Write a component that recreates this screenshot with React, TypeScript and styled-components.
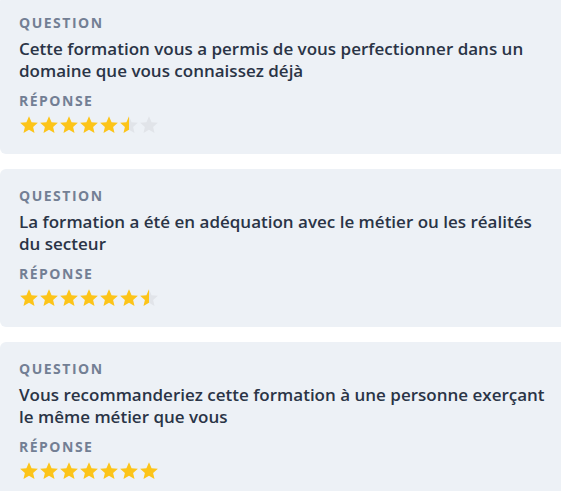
import React from "react";
import styled, { createGlobalStyle } from "styled-components";

const Global = createGlobalStyle`
  html, body { margin: 0; padding: 0; background: #ffffff; }
  body { font-family: "Open Sans", "Noto Sans", sans-serif; overflow: hidden; }
`;

const List = styled.div`
  display: flex;
  flex-direction: column;
  gap: 15px;
  margin-top: -4px;
  margin-right: -10px;
`;

const Card = styled.section`
  background: #edf1f6;
  border-radius: 6px;
  padding: 18px 19px 19px;
  display: flex;
  flex-direction: column;
`;

const Label = styled.div<{ $gap?: number }>`
  font-size: 14px;
  line-height: 18px;
  font-weight: 700;
  letter-spacing: 1.5px;
  text-transform: uppercase;
  color: #737f94;
  margin-bottom: ${(p) => p.$gap ?? 6}px;
`;

const Title = styled.div`
  font-size: 17px;
  line-height: 22px;
  font-weight: 600;
  color: #2a3446;
  margin-bottom: 10px;
  max-width: 527px;
`;

const Stars = styled.div`
  display: flex;
  height: 20px;
`;

const STAR =
  "M12 1.6l3.1 6.95 7.55.72-5.72 5 1.7 7.42L12 17.8l-6.63 3.89 1.7-7.420-5.72-5 7.55-.72z";

const Star: React.FC<{ fill: number; id: string }> = ({ fill, id }) => (
  <svg width="20" height="20" viewBox="0 0 24 24">
    <defs>
      <linearGradient id={id} x1="0" x2="1" y1="0" y2="0">
        <stop offset={`${fill * 100}%`} stopColor="#fcc419" />
        <stop offset={`${fill * 100}%`} stopColor="#e1e4e9" />
      </linearGradient>
    </defs>
    <path d={STAR} fill={`url(#${id})`} />
  </svg>
);

const Rating: React.FC<{ value: number; max?: number; uid: string }> = ({
  value,
  max = 7,
  uid,
}) => (
  <Stars>
    {Array.from({ length: max }, (_, i) => {
      const f = Math.max(0, Math.min(1, value - i));
      return <Star key={i} fill={f} id={`${uid}-${i}`} />;
    })}
  </Stars>
);

const items = [
  {
    q: "Cette formation vous a permis de vous perfectionner dans un domaine que vous connaissez déjà",
    r: 5.5,
  },
  {
    q: "La formation a été en adéquation avec le métier ou les réalités du secteur",
    r: 6.5,
  },
  {
    q: "Vous recommanderiez cette formation à une personne exerçant le même métier que vous",
    r: 7,
  },
];

export default function App() {
  return (
    <>
      <Global />
      <List>
        {items.map((it, i) => (
          <Card key={i}>
            <Label>Question</Label>
            <Title>{it.q}</Title>
            <Label $gap={5}>Réponse</Label>
            <Rating value={it.r} uid={`s${i}`} />
          </Card>
        ))}
      </List>
    </>
  );
}
